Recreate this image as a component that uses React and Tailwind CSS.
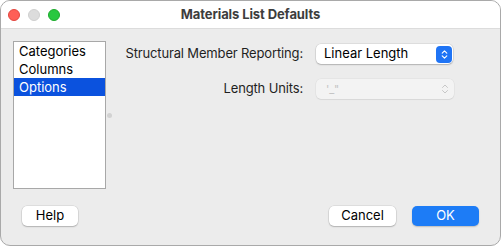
import { ChevronsUpDown } from 'lucide-react';

const font = { fontFamily: 'Inter, "Noto Sans", sans-serif' };

export default function App() {
  return (
    <div className="w-[501px] h-[246px] bg-white" style={font}>
      <div className="w-[501px] h-[246px] rounded-[10px] border border-[#a9a9a9] bg-[#ececec] overflow-hidden flex flex-col">
        {/* Title bar */}
        <div className="h-[28px] bg-white border-b border-[#dcdcdc] flex items-center relative shrink-0">
          <div className="flex items-center gap-[8px] pl-[7px]">
            <span className="w-[12px] h-[12px] rounded-full bg-[#fe5f57] border border-[#e2463f]" />
            <span className="w-[12px] h-[12px] rounded-full bg-[#dcdcdc] border border-[#cfcfcf]" />
            <span className="w-[12px] h-[12px] rounded-full bg-[#28c840] border border-[#1daa2c]" />
          </div>
          <div className="absolute inset-0 flex items-center justify-center text-[13px] font-bold text-[#3d3d3d] tracking-[-0.1px]">
            Materials List Defaults
          </div>
        </div>

        {/* Body */}
        <div className="flex-1 flex flex-col px-[12px] pt-[12px]">
          <div className="flex">
            <div className="w-[93px] h-[148px] bg-white border border-[#a8a8a8] flex flex-col text-[13px] text-black leading-[18px]">
              <div className="h-[18px] pl-[5px]">Categories</div>
              <div className="h-[18px] pl-[5px]">Columns</div>
              <div className="h-[18px] pl-[5px] bg-[#0b52de] text-white">Options</div>
            </div>
            <div className="w-[6px] flex items-center justify-center">
              <span className="w-[5px] h-[5px] rounded-full bg-[#d2d2d2]" />
            </div>
            <div className="flex-1 flex flex-col gap-[15px] pt-[3px] text-[13px] text-[#1f1f1f] tracking-[-0.15px]">
              <div className="flex items-center">
                <div className="w-[191px] text-right">Structural Member Reporting:</div>
                <div className="ml-[13px] w-[137px] h-[20px] bg-white rounded-[5px] shadow-[0_0_0_0.5px_rgba(0,0,0,0.12),0_1px_1.5px_rgba(0,0,0,0.2)] flex items-center justify-between pl-[8px] pr-[1px] text-black tracking-normal">
                  <span>Linear Length</span>
                  <span className="w-[16px] h-[17px] rounded-[4px] bg-[#1f74f5] flex items-center justify-center">
                    <ChevronsUpDown size={11} strokeWidth={2.5} color="white" />
                  </span>
                </div>
              </div>
              <div className="flex items-center">
                <div className="w-[191px] text-right">Length Units:</div>
                <div className="ml-[13px] w-[138px] h-[20px] bg-[#f3f3f3] rounded-[5px] shadow-[0_0_0_0.5px_rgba(0,0,0,0.06),0_1px_1px_rgba(0,0,0,0.06)] flex items-center justify-between pl-[10px] pr-[3px] text-[#c4c4c4] text-[11px]">
                  <span>'_"</span>
                  <ChevronsUpDown size={12} strokeWidth={1.8} color="#c2c2c2" />
                </div>
              </div>
            </div>
          </div>

          {/* Buttons */}
          <div className="flex items-center mt-[17px] text-[13px] text-black">
            <button className="ml-[9px] w-[56px] h-[20px] bg-white rounded-[5px] shadow-[0_0_0_0.5px_rgba(0,0,0,0.12),0_1px_1.5px_rgba(0,0,0,0.2)]">Help</button>
            <div className="flex-1" />
            <button className="w-[67px] h-[20px] bg-white rounded-[5px] shadow-[0_0_0_0.5px_rgba(0,0,0,0.12),0_1px_1.5px_rgba(0,0,0,0.2)]">Cancel</button>
            <button className="ml-[16px] mr-[9px] w-[67px] h-[20px] rounded-[5px] bg-[#1d7cf6] text-white shadow-[0_1px_1.5px_rgba(0,0,0,0.2)]">OK</button>
          </div>
        </div>
      </div>
    </div>
  );
}
